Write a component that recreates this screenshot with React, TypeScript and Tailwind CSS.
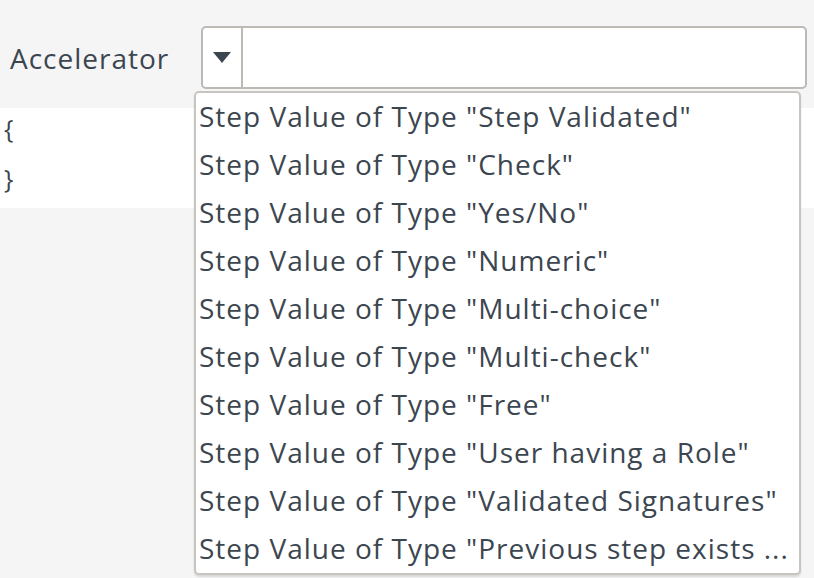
import React from "react";

const options = [
  "Step Validated\"",
  "Check\"",
  "Yes/No\"",
  "Numeric\"",
  "Multi-choice\"",
  "Multi-check\"",
  "Free\"",
  "User having a Role\"",
  "Validated Signatures\"",
  "Previous step exists ...",
];

export default function App() {
  return (
    <div className="relative min-h-[578px] w-[814px] overflow-hidden bg-[#f5f5f5] font-['Open_Sans',sans-serif] text-[#3c4650]">
      {/* field row */}
      <div className="flex items-center pt-[26px] pl-[10px] pr-[7px]">
        <label className="w-[191px] text-[28px] leading-none tracking-[1px]">Accelerator</label>
        <div className="flex h-[63px] flex-1 rounded-[5px] border-2 border-[#bdb9b5] bg-white">
          <button className="flex w-[40px] items-center justify-center border-r-2 border-[#bdb9b5]">
            <svg width="18" height="11" viewBox="0 0 18 11">
              <path d="M0 0h18L9 11z" fill="#3c4650" />
            </svg>
          </button>
          <input className="flex-1 bg-transparent px-3 outline-none" />
        </div>
      </div>

      {/* code preview */}
      <div className="mt-[19px] flex h-[100px] flex-col gap-[10px] bg-white pl-[4px] text-[25px] leading-[40px]">
        <div>{"{"}</div>
        <div>{"}"}</div>
      </div>

      {/* open listbox */}
      <ul className="absolute left-[194px] top-[91px] w-[607px] rounded-[5px] border-2 border-[#c8c4c0] bg-white shadow-[0_2px_2px_rgba(0,0,0,0.12)]">
        {options.map((o) => (
          <li key={o} className="h-[48px] whitespace-nowrap pl-[3px] text-[28px] leading-[46px] tracking-[1px]">
            Step Value of Type "{o}
          </li>
        ))}
      </ul>
    </div>
  );
}
